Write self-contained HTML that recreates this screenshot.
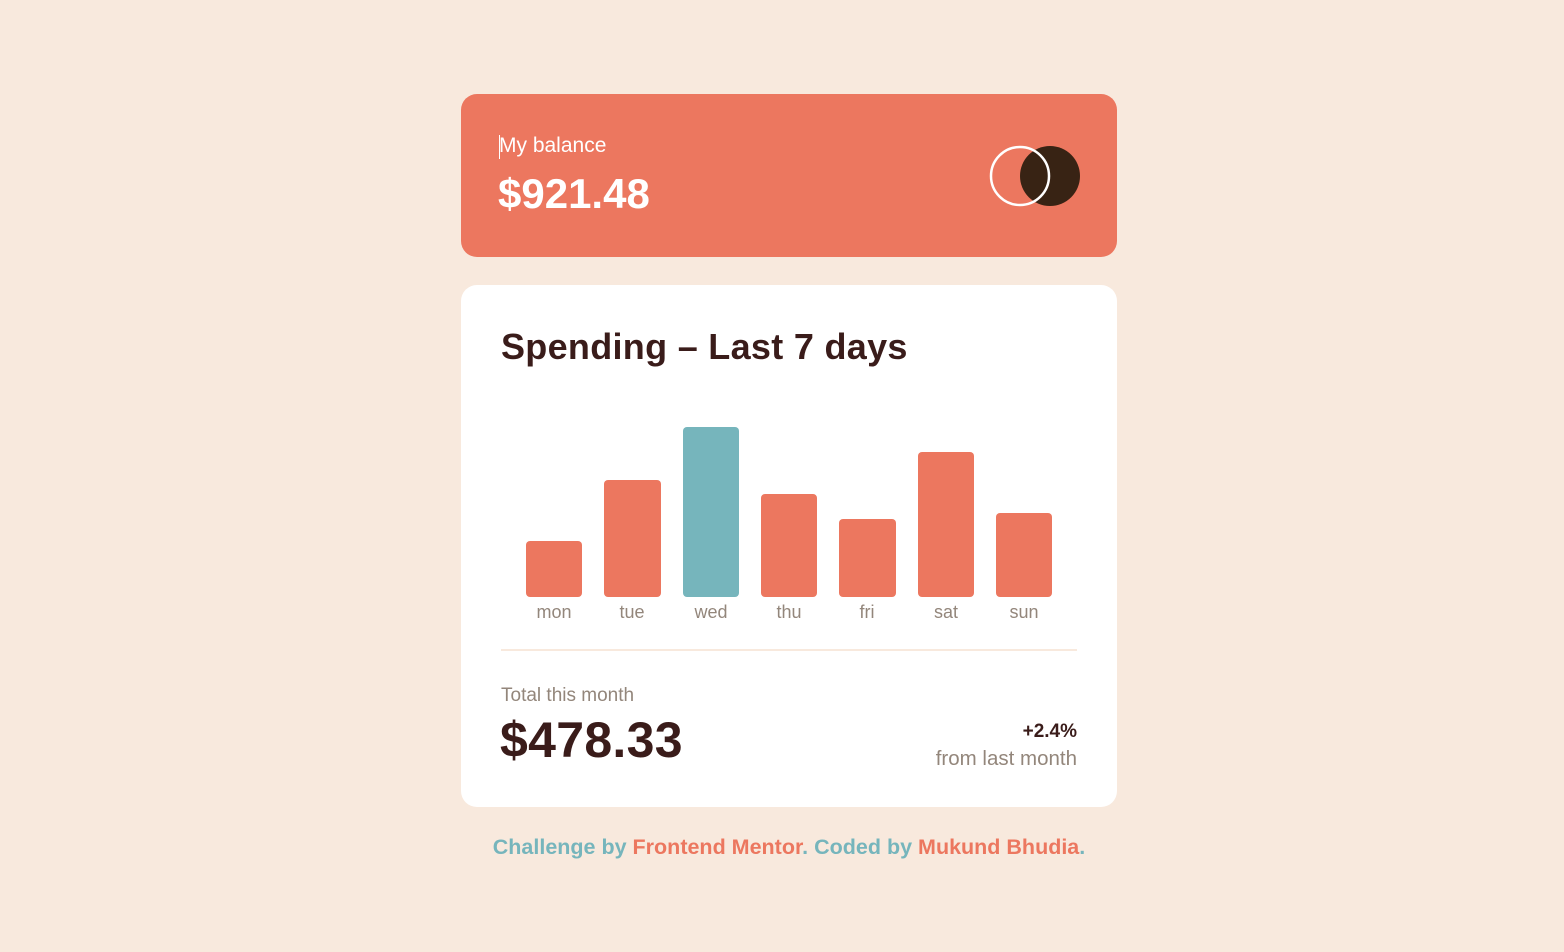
<!DOCTYPE html>
<html><head><meta charset="utf-8"><style>
*{margin:0;padding:0;box-sizing:border-box}
body{width:1564px;height:952px;background:#f8e9dd;font-family:"Liberation Sans",sans-serif;position:relative;overflow:hidden}
.a{position:absolute;white-space:nowrap}
.bal{left:461px;top:94px;width:656px;height:163px;background:#ec775f;border-radius:16px}
.sp{left:461px;top:285px;width:656px;height:522px;background:#fff;border-radius:16px}
.bar{position:absolute;background:#ec775f;border-radius:4px}
.lab{position:absolute;top:602px;font-size:18px;color:#93867b;text-align:center;width:80px}
</style></head><body>
<div class="a bal"></div>
<div class="a" style="left:499px;top:135px;width:1px;height:24px;background:#fff"></div>
<div class="a" style="left:499px;top:134px;font-size:21px;color:#fff">My balance</div>
<div class="a" style="left:498px;top:170px;font-size:42px;font-weight:bold;color:#fff">$921.48</div>
<svg class="a" style="left:985px;top:140px" width="100" height="72"><circle cx="65" cy="36" r="30" fill="#382314"/><circle cx="35" cy="36" r="29" fill="none" stroke="#fff" stroke-width="2.5"/></svg>
<div class="a sp"></div>
<div class="a" style="left:501px;top:326px;font-size:36px;font-weight:bold;color:#3a1c1a;letter-spacing:0.3px">Spending – Last 7 days</div>
<div class="bar" style="left:526px;width:56px;top:541px;height:56px"></div>
<div class="bar" style="left:604px;width:57px;top:480px;height:117px"></div>
<div class="bar" style="left:683px;width:56px;top:427px;height:170px;background:#76b5bc"></div>
<div class="bar" style="left:761px;width:56px;top:494px;height:103px"></div>
<div class="bar" style="left:839px;width:57px;top:519px;height:78px"></div>
<div class="bar" style="left:918px;width:56px;top:452px;height:145px"></div>
<div class="bar" style="left:996px;width:56px;top:513px;height:84px"></div>
<div class="lab" style="left:514px">mon</div>
<div class="lab" style="left:592px">tue</div>
<div class="lab" style="left:671px">wed</div>
<div class="lab" style="left:749px">thu</div>
<div class="lab" style="left:827px">fri</div>
<div class="lab" style="left:906px">sat</div>
<div class="lab" style="left:984px">sun</div>
<div class="a" style="left:501px;top:649px;width:576px;height:2px;background:#f8e9dd"></div>
<div class="a" style="left:501px;top:685px;font-size:19px;color:#93867b">Total this month</div>
<div class="a" style="left:500px;top:711px;font-size:50px;font-weight:bold;color:#3a1c1a;letter-spacing:0.3px">$478.33</div>
<div class="a" style="right:487px;top:721px;font-size:19px;font-weight:bold;color:#3a1c1a">+2.4%</div>
<div class="a" style="right:487px;top:747px;font-size:20.5px;color:#93867b">from last month</div>
<div class="a" style="left:0;width:1578px;text-align:center;top:835px;font-size:21.5px;font-weight:bold;color:#76b5bc">Challenge by <span style="color:#ec775f">Frontend Mentor</span>. Coded by <span style="color:#ec775f">Mukund Bhudia</span>.</div>
</body></html>
